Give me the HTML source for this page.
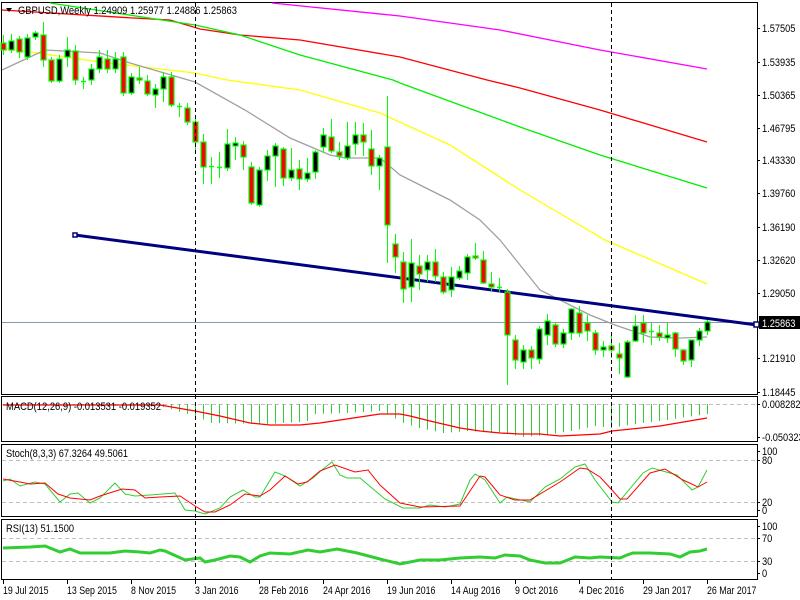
<!DOCTYPE html>
<html><head><meta charset="utf-8"><style>
body{margin:0;background:#fff;width:800px;height:600px;overflow:hidden}
svg{display:block}
text{font-family:"Liberation Sans",sans-serif;font-size:11px;fill:#000}
</style></head><body>
<svg id="s" width="800" height="600" xmlns="http://www.w3.org/2000/svg">
<rect width="800" height="600" fill="#fff"/>
<g stroke="#000" stroke-width="1" fill="none">
<rect x="1.5" y="2.5" width="756" height="392"/>
<rect x="1.5" y="396.5" width="756" height="45"/>
<rect x="1.5" y="444.5" width="756" height="72"/>
<rect x="1.5" y="519.5" width="756" height="60"/>
</g>
<g stroke="#c0c0c0" stroke-dasharray="4,3" stroke-width="1">
<line x1="2" y1="404.5" x2="757" y2="404.5"/>
<line x1="2" y1="460.5" x2="757" y2="460.5"/>
<line x1="2" y1="502.5" x2="757" y2="502.5"/>
<line x1="2" y1="538.5" x2="757" y2="538.5"/>
<line x1="2" y1="561.5" x2="757" y2="561.5"/>
</g>
<line x1="2" y1="322.5" x2="757" y2="322.5" stroke="#8a99a6" stroke-width="1"/>
<g fill="none" stroke-width="1.3">
<polyline stroke="#ff00ff" points="272,3 400,16 500,30 600,50 707,69"/>
<polyline stroke="#ff0000" points="2,10 133,18 170,20 200,29 240,35 300,40 400,57 487,80 520,88 600,110 707,142"/>
<polyline stroke="#00ee00" points="50,3 195,25 240,35 300,55 393,80 400,83 520,127 600,155 707,188"/>
<polyline stroke="#ffff00" points="2,48 100,62 195,73 227,80 300,90 380,113 450,145 520,190 605,240 707,284"/>
<polyline stroke="#a0a0a0" points="2,70 45,50 100,53 130,63 195,82 245,110 290,138 330,155 345,158 380,158 400,175 420,185 450,200 480,220 500,240 520,265 540,290 560,300 590,315 615,325 650,337 680,338 707,337"/>
</g>
<line x1="75" y1="235" x2="757" y2="325" stroke="#000080" stroke-width="3"/>
<rect x="73" y="233" width="4" height="4" fill="#fff" stroke="#000080" stroke-width="1.5"/>
<rect x="754" y="322" width="5" height="5" fill="#fff" stroke="#000080" stroke-width="1.5"/>
<g id="candles"></g>
<g id="macd"></g>
<polyline fill="none" stroke="#ff0000" stroke-width="1.3" points="3,405 160,405 195,411 220,416 250,423 270,425 300,425 320,423 340,420 380,414 400,414 410,416 430,421 460,428 480,431 500,433 520,434 540,434 560,436 600,434 612,431 660,426 707,418"/>
<polyline fill="none" stroke="#32cd32" stroke-width="1" points="3,481 10,479 20,486 35,482 45,484 60,502 70,494 78,493 90,503 100,498 115,483 125,494 135,496 150,495 175,493 185,510 195,511 205,514 220,508 230,497 243,490 255,497 260,497 275,472 285,476 300,486 313,478 323,469 332,462 340,475 347,478 360,478 385,499 403,508 420,508 430,505 445,507 460,504 470,480 475,474 485,480 500,503 507,497 530,502 545,487 560,479 575,467 585,464 595,480 612,502 618,503 643,473 652,468 677,475 692,490 698,487 707,470"/>
<polyline fill="none" stroke="#ff0000" stroke-width="1" points="3,479 20,482 30,484 45,483 58,494 70,498 90,500 100,496 122,489 135,490 145,498 160,497 180,496 195,506 205,512 215,512 230,505 245,494 260,496 270,490 285,476 298,484 307,482 320,471 335,465 355,472 368,470 380,485 400,503 420,507 460,506 480,476 485,477 500,495 515,500 530,500 560,482 580,468 587,469 600,477 612,490 620,499 627,499 650,473 665,469 683,480 698,487 707,482"/>
<polyline fill="none" stroke="#32cd32" stroke-width="3" points="3,548 30,547 45,546 50,548 60,552 70,549 80,553 110,553 125,551 140,552 150,553 160,550 165,551 185,560 200,558 205,562 215,560 230,556 240,557 250,562 260,556 270,553 290,554 308,550 320,552 337,549 357,553 380,559 400,564 420,560 440,560 460,558 480,557 495,558 505,555 520,556 530,560 545,563 560,563 575,557 590,558 600,557 620,558 627,555 633,553 650,553 670,554 680,557 690,552 700,551 707,549"/>
<g stroke="#000" stroke-dasharray="4,3" stroke-width="1">
<line x1="195.5" y1="3" x2="195.5" y2="579"/>
<line x1="611.5" y1="3" x2="611.5" y2="579"/>
</g>
<path d="M6 8 L12 8 L9 12 Z" fill="#000"/>
<g id="lbl">
<text x="18" y="14" data-w="219">GBPUSD,Weekly  1.24909 1.25977 1.24886 1.25863</text>
<text x="6" y="410" data-w="155">MACD(12,26,9) -0.013531 -0.019352</text>
<text x="6" y="457" data-w="122">Stoch(8,3,3) 67.3264 49.5061</text>
<text x="6" y="532" data-w="68">RSI(13) 51.1500</text>
</g>
<g id="ax"></g>
<rect x="759" y="316" width="41" height="13" fill="#000"/>
<text id="pl" x="762" y="327" style="fill:#fff">1.25863</text>
</svg>
<script>
var NS="http://www.w3.org/2000/svg";
function el(p,t,a,txt){var e=document.createElementNS(NS,t);for(var k in a)e.setAttribute(k,a[k]);if(txt)e.textContent=txt;p.appendChild(e);return e;}
var C=[
['r',43,50,35,55],['b',41,50,34,53],['r',39,52,36,58],['b',38,57,34,60],['b',33,37,31,40],['r',35,60,22,67],['r',60,81,57,83],['b',59,81,55,83],['b',50,57,37,67],['r',51,80,45,85],['d',81,81,77,89],['b',69,80,64,85],['b',57,69,50,73],['r',59,69,50,73],['b',59,69,52,73],['r',57,93,52,96],['b',77,93,73,95],['r',78,80,67,84],['r',81,94,75,96],['b',89,95,84,108],['b',77,89,72,102],['r',77,105,72,107],['d',106,106,103,117],['r',108,122,103,125],['r',122,142,115,150],
['r',142,167,134,184],['d',166,166,157,184],['d',167,167,152,178],['b',144,168,129,171],['b',143,146,137,160],['r',145,157,141,170],['r',167,203,162,205],['b',170,205,167,207],['b',156,170,150,181],['b',146,156,143,187],['r',149,178,147,186],['b',170,178,148,181],['r',169,179,160,190],['b',173,179,158,182],['b',152,172,150,179],['b',135,147,128,153],['r',137,151,119,153],['r',152,156,142,160],['b',146,158,122,160],['b',135,144,122,155],['r',135,142,123,156],['r',149,166,130,175],['b',158,166,155,190],['r',147,225,96,263],['r',244,257,234,273],['r',262,289,252,303],['b',263,287,239,302],['r',266,274,255,290],['b',262,270,255,282],['r',262,276,249,282],['r',277,292,272,294],['b',277,290,267,297],['b',271,278,266,280],['b',257,273,254,280],['r',256,258,243,260],['r',260,283,251,284],['r',284,287,272,291],['d',287,287,278,292],
['r',292,335,289,385],['r',340,360,335,369],['b',350,362,345,369],['r',350,358,346,369],['b',329,359,326,364],['b',321,335,314,345],['r',325,344,322,347],['b',333,344,329,348],['b',309,333,308,340],['r',313,333,306,337],['r',323,331,315,341],['r',333,350,330,355],['b',347,350,341,357],['r',346,350,336,358],['r',354,358,343,374],['b',342,377,340,378],['b',326,341,315,342],['r',323,333,315,343],['d',331,331,323,345],['r',333,337,325,341],['b',335,338,323,343],['r',333,349,332,357],['r',350,361,349,365],['b',340,360,340,367],['b',331,340,328,346],['b',322,331,320,335]];
var g=document.getElementById('candles');
C.forEach(function(c,i){var x=3+8*i;
el(g,'line',{x1:x+.5,y1:c[3],x2:x+.5,y2:c[4],stroke:'#00ff00','stroke-width':1});
if(c[0]=='d'){el(g,'line',{x1:x-2,y1:c[1]+.5,x2:x+3,y2:c[1]+.5,stroke:'#00ff00','stroke-width':1.5});}
else el(g,'rect',{x:x-2,y:c[1],width:5,height:Math.max(2,c[2]-c[1]),fill:c[0]=='b'?'#000':'#ff0000',stroke:'#00ff00','stroke-width':1.2});
});
var mb=[[3,405],[160,406],[180,412],[195,416],[211,423],[267,424],[299,422],[307,421],[315,414],[347,413],[379,411],[387,414],[403,423],[419,428],[443,433],[467,431],[507,434],[523,437],[547,435],[571,431],[595,426],[611,428],[635,424],[667,420],[707,414]];
function interp(x){for(var k=0;k<mb.length-1;k++){if(x>=mb[k][0]&&x<=mb[k+1][0]){var t=(x-mb[k][0])/(mb[k+1][0]-mb[k][0]);return mb[k][1]+t*(mb[k+1][1]-mb[k][1]);}}return 405;}
var mg=document.getElementById('macd');
for(var i=0;i<89;i++){var x=3+8*i;var y=interp(x);if(y>405.5)el(mg,'rect',{x:x,y:404,width:1,height:y-404,fill:'#32cd32'});}
var ax=document.getElementById('ax');
[['1.57505',28],['1.53935',62],['1.50365',95],['1.46795',128],['1.43330',160],['1.39760',193],['1.36190',227],['1.32620',260],['1.29050',293],['1.21910',358],['1.18445',392],['0.008282',404],['-0.050323',437],['100',451],['80',460],['20',502],['0',510],['100',526],['70',538],['30',561],['0',573]].forEach(function(a){
el(ax,'line',{x1:757,y1:a[1]+.5,x2:760,y2:a[1]+.5,stroke:'#000'});
var t=el(ax,'text',{x:762,y:a[1]+4},a[0]);t.setAttribute('data-r','0.84');});
['19 Jul 2015','13 Sep 2015','8 Nov 2015','3 Jan 2016','28 Feb 2016','24 Apr 2016','19 Jun 2016','14 Aug 2016','9 Oct 2016','4 Dec 2016','29 Jan 2017','26 Mar 2017'].forEach(function(d,i){var x=3+64*i;
el(ax,'line',{x1:x+.5,y1:580,x2:x+.5,y2:584,stroke:'#000'});
var t=el(ax,'text',{x:x,y:594},d);t.setAttribute('data-r','0.8');});
document.getElementById('pl').setAttribute('data-r','0.84');
var ts=document.querySelectorAll('text');
for(var i=0;i<ts.length;i++){var t=ts[i];var L=t.getComputedTextLength();var w=t.getAttribute('data-w');var r=t.getAttribute('data-r');
var nw=w?+w:(r?L*r:0);if(nw>0){t.setAttribute('textLength',nw);t.setAttribute('lengthAdjust','spacingAndGlyphs');}}
</script>
</body></html>
